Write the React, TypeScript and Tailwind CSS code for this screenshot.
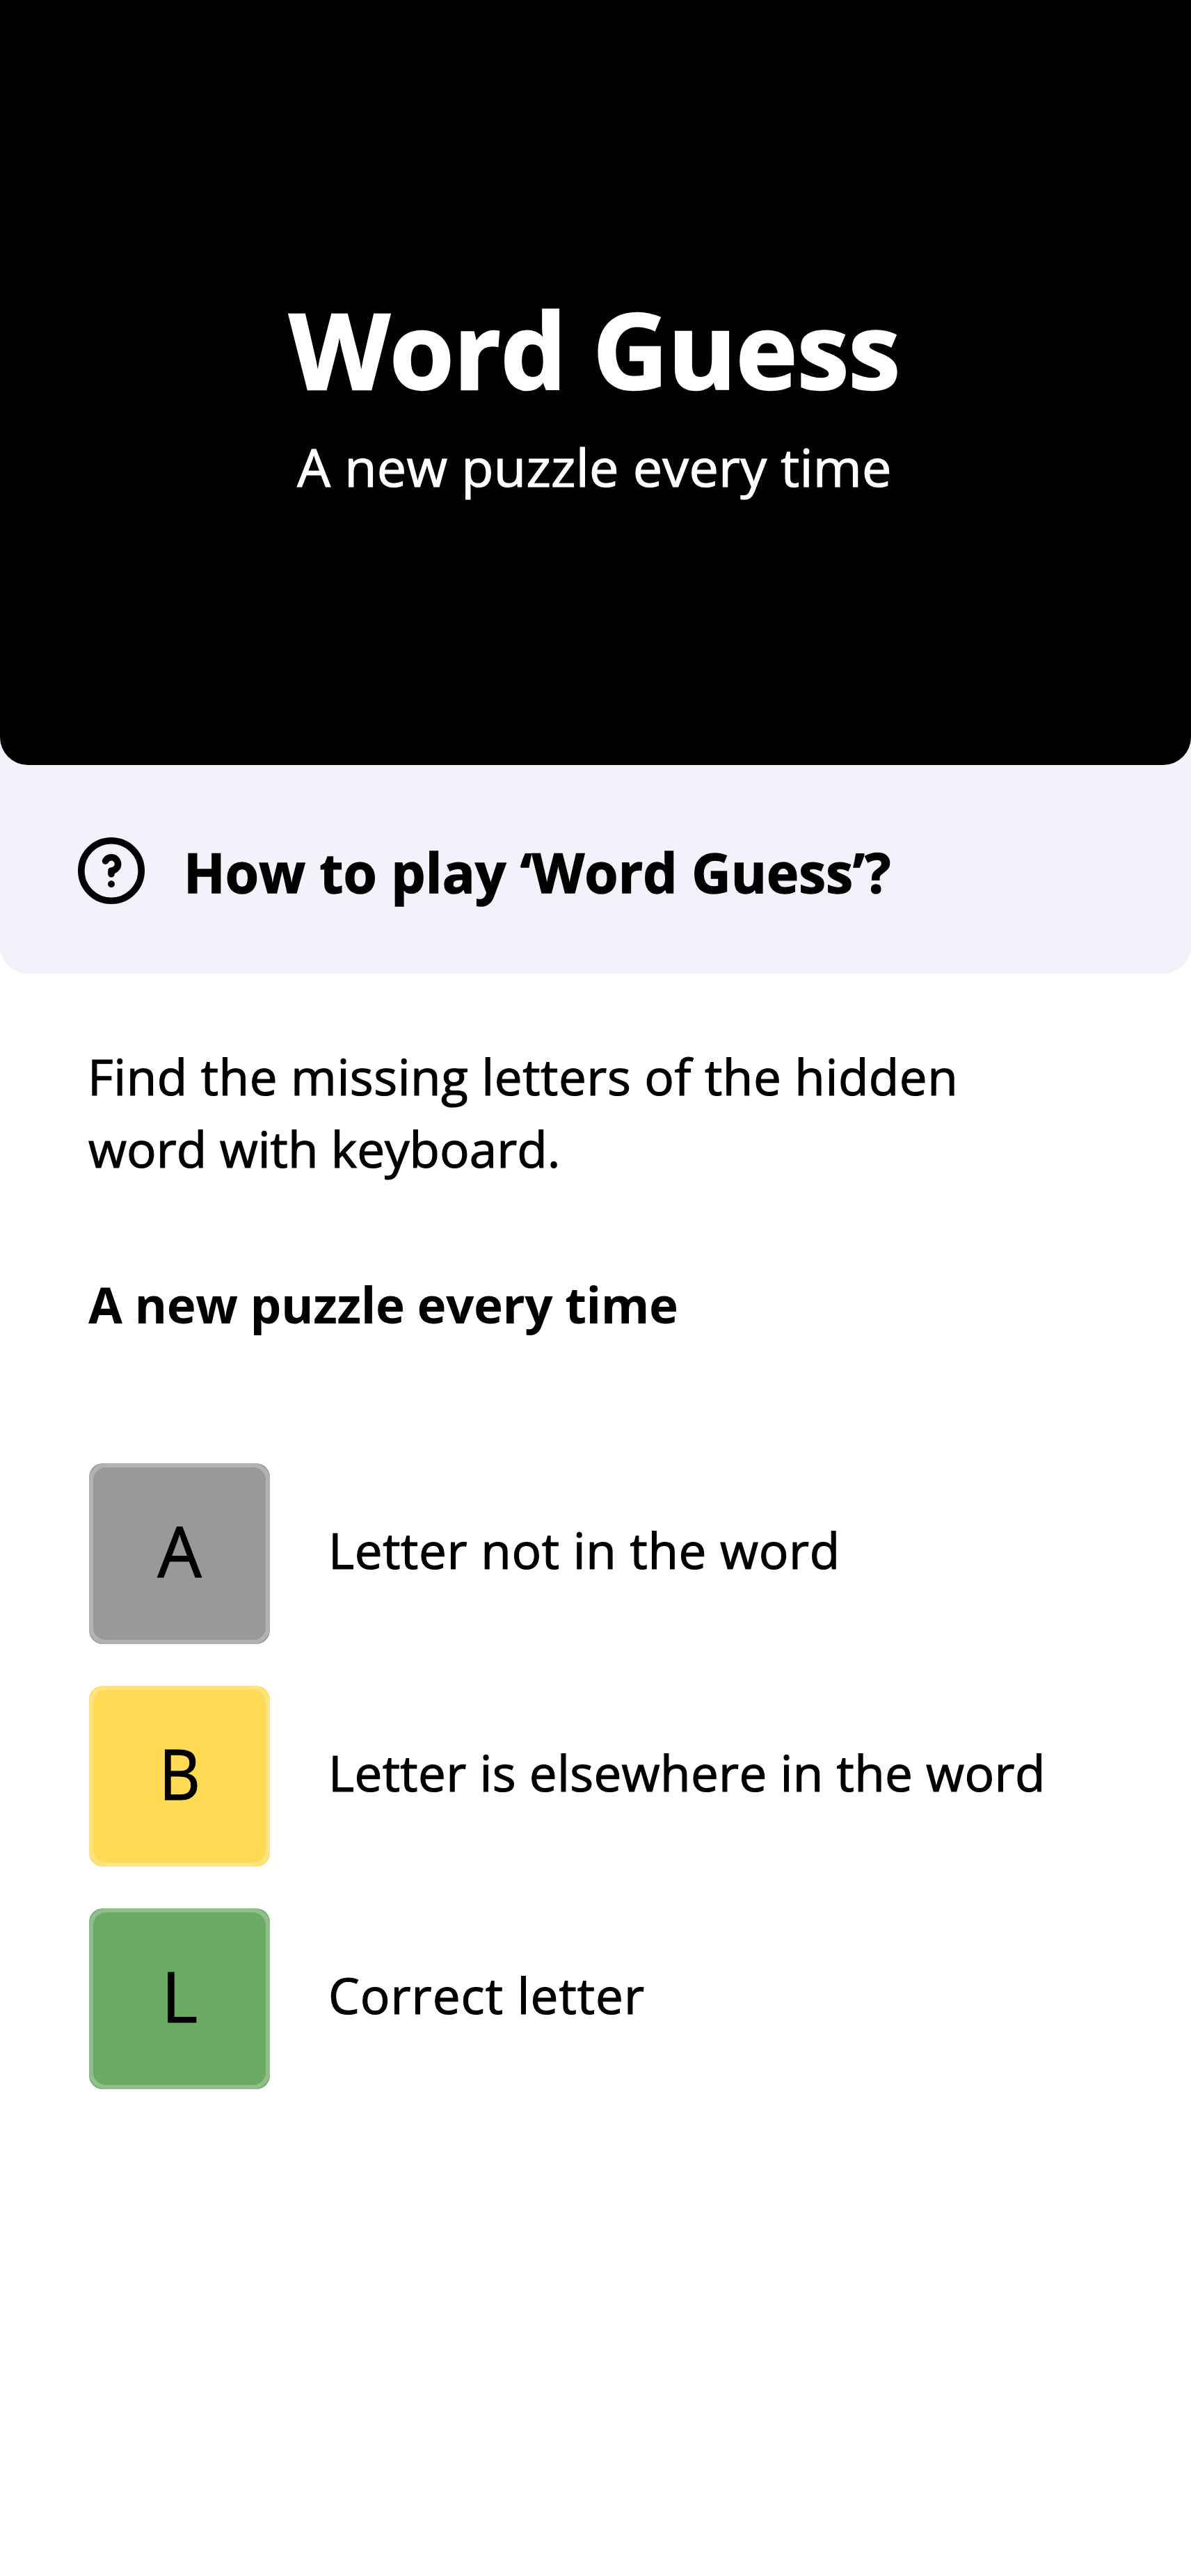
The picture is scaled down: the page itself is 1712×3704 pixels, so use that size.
const rows = [
  {
    letter: "A",
    text: "Letter not in the word",
    fill: "bg-[#999999]",
    glyph: "",
    spacing: "tracking-[0.62px]",
  },
  {
    letter: "B",
    text: "Letter is elsewhere in the word",
    fill: "bg-[#ffda54]",
    glyph: "scale-x-[0.92]",
    spacing: "tracking-[0.36px]",
  },
  {
    letter: "L",
    text: "Correct letter",
    fill: "bg-[#6baa65]",
    glyph: "",
    spacing: "tracking-[1.05px]",
  },
];

function HelpIcon() {
  return (
    <svg viewBox="0 0 96 96" className="size-24 shrink-0" fill="none" stroke="#000" strokeWidth="9.6" strokeLinecap="round" strokeLinejoin="round">
      <circle cx="48" cy="48" r="43.2" />
      <path d="M39.6 34C41.2 30.9 44.3 28.8 48 28.8C53.3 28.8 57.6 33.1 57.6 38.4C57.6 43.7 53.3 48 48 48V52.8" />
      <circle cx="48" cy="67.2" r="4.9" fill="#000" stroke="none" />
    </svg>
  );
}

export default function App() {
  return (
    <div className="h-[3704px] w-[1712px] overflow-hidden bg-white font-['Open_Sans','Noto_Sans',sans-serif] text-black">
      <div className="rounded-b-[40px] bg-[#f2f2fb]">
        <header className="h-[1100px] rounded-b-[40px] bg-black pt-[422px] pr-[3px] text-center text-white">
          <h1 className="text-[150px] leading-[160px] font-bold tracking-[-0.7px] [-webkit-text-stroke:2.4px_white]">
            Word Guess
          </h1>
          <p className="mt-[39px] text-[75.6px] leading-[100px] tracking-[0.25px] [-webkit-text-stroke:1.2px_white]">
            A new puzzle every time
          </p>
        </header>
        <div className="flex h-[300px] items-start gap-[56px] pt-[104px] pl-28">
          <HelpIcon />
          <h2 className="text-[78px] leading-[100px] font-bold tracking-[0.12px] whitespace-nowrap [-webkit-text-stroke:1.4px_black]">
            How to play ‘Word Guess’?
          </h2>
        </div>
      </div>

      <main className="px-32 pt-24 text-[71px] leading-[104px] whitespace-nowrap">
        <p className="[-webkit-text-stroke:1.2px_black]">
          <span className="-ml-[2px] block tracking-[0.55px]">Find the missing letters of the hidden</span>
          <span className="-ml-px block">word with keyboard.</span>
        </p>
        <p className="mt-[120px] -ml-px font-bold tracking-[-0.44px]">A new puzzle every time</p>
        <ul className="mt-44 flex flex-col gap-[60px]">
          {rows.map((r) => (
            <li key={r.letter} className="flex items-center gap-[84px] [-webkit-text-stroke:1.2px_black]">
              <div className={`size-[260px] shrink-0 rounded-[20px] ${r.fill}`}>
                <div className="flex size-full items-center justify-center rounded-[24px] border-[6px] border-white/25 pb-[10px] text-[100px]">
                  <span className={`inline-block ${r.glyph}`}>{r.letter}</span>
                </div>
              </div>
              <span className={`pb-[11px] ${r.spacing}`}>{r.text}</span>
            </li>
          ))}
        </ul>
      </main>
    </div>
  );
}
